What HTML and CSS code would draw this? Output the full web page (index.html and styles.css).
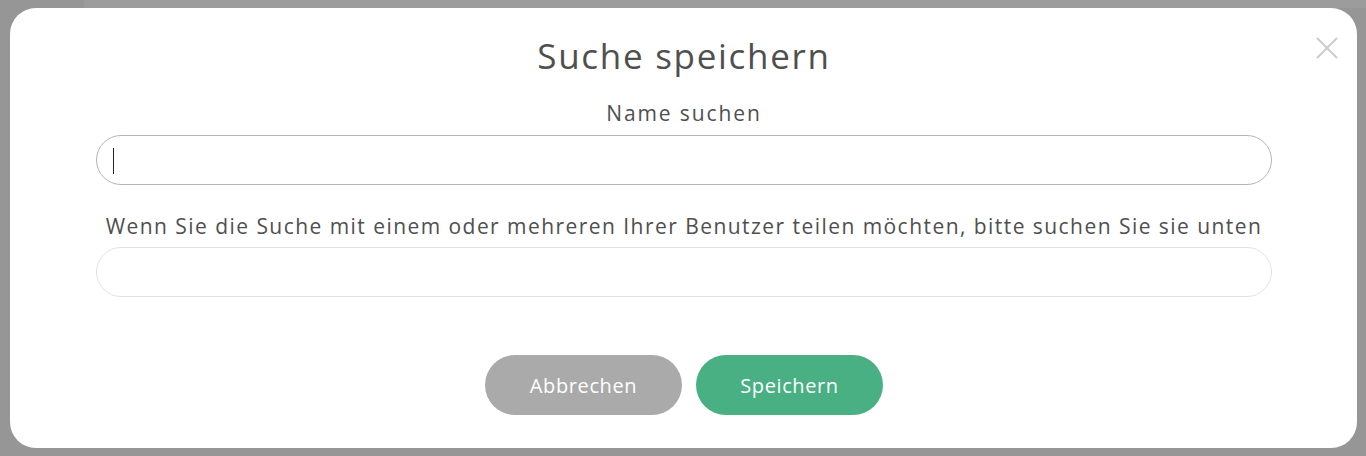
FILE: index.html
```html
<!DOCTYPE html>
<html lang="de">
<head>
<meta charset="utf-8">
<title>Suche speichern</title>
<link rel="stylesheet" href="styles.css">
</head>
<body>
<div class="page-strip"></div>
<div class="modal">
  <button class="close" aria-label="Schließen">
    <svg width="24" height="24" viewBox="0 0 24 24"><path d="M2 2 L22 22 M22 2 L2 22" stroke="#cccccc" stroke-width="2" fill="none"/></svg>
  </button>
  <h2 class="title">Suche speichern</h2>
  <label class="label label-name" for="name">Name suchen</label>
  <div class="field field-focus"><span class="caret"></span><input id="name" class="input" type="text"></div>
  <label class="label label-share" for="users">Wenn Sie die Suche mit einem oder mehreren Ihrer Benutzer teilen möchten, bitte suchen Sie sie unten</label>
  <div class="field field-light"><input id="users" class="input" type="text"></div>
  <div class="actions">
    <button class="btn btn-cancel">Abbrechen</button>
    <button class="btn btn-save">Speichern</button>
  </div>
</div>
</body>
</html>
```
FILE: styles.css
```css
html, body {
  margin: 0;
  padding: 0;
  background: #969696;
  height: 456px;
  overflow: hidden;
  font-family: "Open Sans", "Noto Sans", sans-serif;
}
.page-strip {
  position: absolute;
  top: 0;
  left: 84px;
  right: 0;
  height: 8px;
  background: #9c9c9c;
}
.modal {
  position: relative;
  box-sizing: border-box;
  width: 1347px;
  height: 440px;
  margin: 8px 0 0 10px;
  background: #ffffff;
  border-radius: 26px;
  padding: 23px 85px 0 86px;
  display: flex;
  flex-direction: column;
  align-items: stretch;
  color: #4f4f4f;
}
.close {
  position: absolute;
  top: 28px;
  right: 18px;
  width: 24px;
  height: 24px;
  padding: 0;
  border: 0;
  background: transparent;
}
.close svg { display: block; }
.title {
  margin: 0;
  font-size: 35px;
  font-weight: 400;
  line-height: 50px;
  letter-spacing: 1.7px;
  text-align: center;
}
.label {
  display: block;
  margin-top: 17px;
  font-size: 21px;
  line-height: 30px;
  text-align: center;
}
.label-name {
  letter-spacing: 1.9px;
}
.label-share {
  margin-top: 26px;
  letter-spacing: 1.45px;
  white-space: nowrap;
}
.field {
  position: relative;
  box-sizing: border-box;
  height: 50px;
  margin-top: 7px;
  border: 1px solid #b5b5b5;
  border-radius: 25px;
}
.field-light {
  margin-top: 6px;
  border-color: #e2e2e2;
}
.input {
  box-sizing: border-box;
  width: 100%;
  height: 100%;
  border: 0;
  outline: none;
  background: transparent;
  padding: 0 20px;
  font: inherit;
  font-size: 18px;
}
.caret {
  position: absolute;
  left: 16px;
  top: 12px;
  width: 1px;
  height: 26px;
  background: #222;
}
.actions {
  display: flex;
  justify-content: center;
  gap: 14px;
  margin-top: 58px;
}
.btn {
  height: 60px;
  border: 0;
  border-radius: 30px;
  color: #ffffff;
  font-family: inherit;
  font-size: 20px;
  letter-spacing: 0.6px;
}
.btn-cancel {
  width: 197px;
  background: #aaaaaa;
}
.btn-save {
  width: 187px;
  background: #48b083;
}
```
